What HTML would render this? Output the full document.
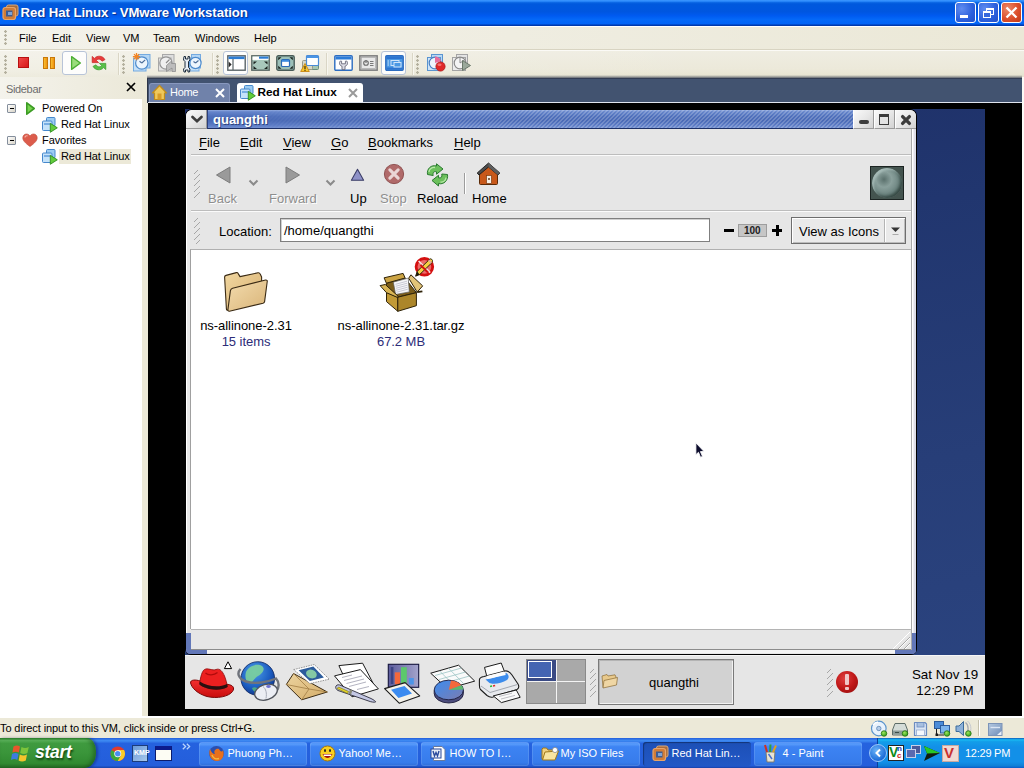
<!DOCTYPE html>
<html><head><meta charset="utf-8"><title>Red Hat Linux - VMware Workstation</title>
<style>
*{box-sizing:border-box;margin:0;padding:0}
html,body{width:1024px;height:768px;overflow:hidden;background:#ece9d8;font-family:"Liberation Sans",sans-serif;font-size:11px;color:#000}
.abs,.abs>*{position:absolute}
#root{position:relative;width:1024px;height:768px;overflow:hidden}
#root div,#root span,#root svg{position:absolute;white-space:nowrap}
/* XP title */
#xptitle{left:0;top:0;width:1024px;height:26px;background:linear-gradient(to bottom,#3c98ff 0%,#2a88fa 5%,#0a66e4 10%,#0059dd 15%,#0056e0 45%,#005af0 60%,#0468f8 75%,#0264f6 91%,#0048c8 95%,#00309c 100%)}
#xptitle .t{left:20.500px;top:5px;font-weight:bold;font-size:13.150px;color:#fff;text-shadow:1px 1px 1px #0a2f8a;letter-spacing:-0.05px}
.capbtn{width:21px;height:21px;top:2px;border:1px solid #fff;border-radius:3px;background:radial-gradient(circle at 30% 30%,#5f8cf0 0%,#2b5fdc 60%,#2350c8 100%)}
#xpmenu{left:0;top:26px;width:1024px;height:24px;background:linear-gradient(to right,#f3f2ea 0%,#efede1 50%,#ebe8d7 100%);border-top:1px solid #fff;border-bottom:1px solid #d8d4c2}
#xpmenu span{top:5px;font-size:11px}
#xptool{left:0;top:50px;width:1024px;height:27px;box-shadow:inset 0 1px 0 #fbfaf6;background:linear-gradient(to right,rgba(255,255,255,.300),rgba(255,255,255,0) 70%),linear-gradient(to bottom,#efede2 0%,#ece9da 70%,#e6e3d0 100%)}
#tshadow{left:147px;top:75px;width:875px;height:4px;background:linear-gradient(to bottom,rgba(44,52,72,0),rgba(44,52,72,.350) 40%,#2c3448 100%)}
.grip{width:3px;height:18px;background-image:radial-gradient(circle at 1.5px 1.5px,#b4b09e 1px,transparent 1.500px);background-size:3px 4px}
.tsep{width:1px;height:22px;background:#dad6c6;box-shadow:1px 0 0 #f8f7f0}
.tbtn{border:1px solid #b8c4d8;border-radius:3px;background:#fdfdfc}
/* sidebar */
#side{left:0;top:77px;width:142px;height:641px;background:#fff}
#sidehead{left:0;top:0;width:142px;height:22px;background:linear-gradient(to right,#f4f3ec,#ebe8d8)}
#sidehead .l{left:6px;top:6px;color:#6d6d6d;font-size:11px;letter-spacing:-0.350px}
#split{left:142px;top:77px;width:6px;height:641px;background:#ece9d8}
#tabs{left:147px;top:78px;width:875px;height:25px;background:#425370;border-top:1.500px solid #323c54;border-left:1px solid #2c3448}
#vm{left:148px;top:103px;width:874px;height:613px;background:#000}
#vmr{left:1022px;top:77px;width:2px;height:641px;background:#fbfaf6}
#xpstatus{left:0;top:716px;width:1024px;height:22px;background:#ece9d8;border-top:2px solid #fff}
#xpstatus .l{left:0px;top:4px;font-size:11px;letter-spacing:-0.1px}
#taskbar{left:0;top:738px;width:1024px;height:30px;background:linear-gradient(to bottom,#245edb 0%,#3f8cf3 9%,#2562df 18%,#245edb 92%,#1941a5 100%)}
.tk{top:4px;height:24px;width:108px;border-radius:3px;background:linear-gradient(to bottom,#3c81f3 0%,#5a9dfb 8%,#3d83f3 20%,#377ceb 85%,#2f6dd8 100%);box-shadow:inset 0 0 0 1px rgba(255,255,255,.12)}
.tk span{color:#fff;font-size:11px;top:5px;left:28.500px}
.tk.act{background:linear-gradient(to bottom,#1c4fb5 0%,#1e52bb 30%,#2258c5 100%);box-shadow:inset 1px 1px 1px rgba(0,0,0,.35)}
/* guest */
#guest{left:37px;top:6px;width:800px;height:600px;background:linear-gradient(170deg,#1d2e66 0%,#21366f 30%,#273e78 65%,#2b4480 100%);overflow:hidden;font-size:13px}

/* guest window */
#g{left:0;top:0;width:1024px;height:768px;font-size:13px}
#gwin{left:186px;top:110px;width:730px;height:544px;background:#e6e6e6;border-radius:6px 6px 5px 5px;box-shadow:0 0 0 1px #000}
#gtitle{left:21px;top:0;width:646px;height:19px;background:linear-gradient(to bottom,#92abdf 0%,#6585cb 10%,#4f70bb 35%,#4a6ab6 60%,#5c7cc6 85%,#7490d0 100%);border-bottom:1px solid #1c2f66;border-left:1px solid #2c3f7a}
#ghatch{left:40px;top:0;width:606px;height:18px;background:repeating-linear-gradient(135deg,rgba(255,255,255,0) 0,rgba(255,255,255,0) 1.600px,rgba(255,255,255,.200) 1.600px,rgba(255,255,255,.200) 2.830px);-webkit-mask-image:linear-gradient(to right,transparent 0,#000 30%);mask-image:linear-gradient(to right,transparent 0,#000 30%)}
#gtitle .t{left:5px;top:2px;font-weight:bold;font-size:13px;color:#fff;text-shadow:1px 1px 0 rgba(20,30,80,.6)}
.gwb{top:0;height:19px;width:21px;background:linear-gradient(135deg,#fafafa 0%,#e8e8e8 50%,#d2d2d2 100%);border-left:1px solid #fff;border-right:1px solid #9a9a9a;border-bottom:1px solid #9a9a9a}
#gmenu{left:5px;top:19px;width:720px;height:26px;border-bottom:1px solid #bdbdbd}
#gmenu span{top:6px;margin-left:-1px}
#gmenu u{text-decoration:underline;text-underline-offset:2px}
#gtool{left:5px;top:45px;width:720px;height:56px;border-top:1px solid #fbfbfb;border-bottom:1px solid #bdbdbd}
#gloc{left:5px;top:101px;width:720px;height:38px;border-top:1px solid #fbfbfb}
.ghandle{width:6px;background:repeating-linear-gradient(135deg,transparent 0,transparent 2.300px,#a6a6a6 2.300px,#a6a6a6 2.900px,#fff 2.900px,#fff 3.500px,transparent 3.500px,transparent 4.240px)}
.glbl{font-size:13px;color:#000}
.glbl.dis{color:#8e8e8e;text-shadow:1px 1px 0 #fff}
#gcontent{left:4px;top:139px;width:721px;height:380px;background:#fff;border-top:1px solid #b0b0b0;border-left:1px solid #a0a0a0}
#gstatus{left:5px;top:519px;width:720px;height:21px;border-top:1px solid #b4b4b4;border-bottom:1px solid #8c8c8c}

#gpanel{left:185px;top:655px;width:800px;height:54px;background:#e6e6e6;box-shadow:inset 0 1px 0 #f6f6f6;font-size:13px}
.ws{background:#a9a9a9}
.ficon{font-size:13px;text-align:center;letter-spacing:-0.050px}

.tri{width:0;height:0}
.tree span{font-size:11px;letter-spacing:-0.080px}
.pm{width:9px;height:9px;border:1px solid #848e9c;background:linear-gradient(135deg,#fff,#d8d4c8);border-radius:1px}
.pm:after{content:"";position:absolute;left:1.5px;top:3px;width:4.5px;height:1px;background:#000}
#start{left:0;top:0;width:96px;height:30px;border-radius:0 9px 11px 0 / 0 13px 15px 0;background:linear-gradient(to bottom,#2f8a2f 0%,#59b259 8%,#3f9a3f 18%,#3a953a 50%,#318a31 85%,#266f26 100%);box-shadow:inset -3px 0 4px rgba(0,40,0,.35), 2px 0 3px rgba(0,0,60,.35)}
#start span{left:35px;top:4px;font-size:17.500px;font-weight:bold;font-style:italic;color:#fff;text-shadow:1px 2px 2px rgba(0,40,0,.7);letter-spacing:-0.3px}
#tray{left:877px;top:0;width:147px;height:30px;background:linear-gradient(to bottom,#0c59b9 0%,#19b9f3 6%,#139ee9 12%,#1290e8 30%,#1290e8 80%,#0f7fd6 93%,#095bc9 100%);border-left:1px solid #0a3f9a}
</style></head><body><div id="root"><svg width="0" height="0" style="left:0;top:0"><defs>
<g id="vmicon"><rect x="5.500" y="1.500" width="8.500" height="8.500" rx="1" fill="#9cccf2" stroke="#4688cc" stroke-width="1"/><rect x="1.500" y="5" width="9.500" height="9.500" rx="1" fill="#c4e2fa" stroke="#4688cc" stroke-width="1"/><rect x="3" y="7" width="6.500" height="2" fill="#78aee4"/><path d="M9.300 7.300 L16.300 11.800 L9.300 16.300 Z" fill="#62cc3c" stroke="#2c8c1c" stroke-width=".9" stroke-linejoin="round"/></g>
</defs></svg>

<div id="xptitle"><svg style="left:2px;top:4px" width="17" height="17" viewBox="0 0 17 17"><rect x="4.500" y="1" width="11.500" height="11" rx="2" fill="#a86c3c" stroke="#d8a878" stroke-width="1"/><rect x="1" y="3.500" width="12.500" height="12" rx="2.200" fill="#d07c38" stroke="#e8a468" stroke-width="1.200"/><rect x="4" y="6.500" width="6.500" height="6" fill="#3c5c94"/><rect x="6" y="8" width="4" height="3" fill="#7ca4d8"/></svg>
<div class="capbtn" style="left:955px"></div><div style="left:960px;top:15px;width:8px;height:3px;background:#fff"></div>
<div class="capbtn" style="left:978px"></div><div style="left:986px;top:8px;width:8px;height:7px;border:1px solid #fff;border-top-width:2px"></div><div style="left:983px;top:11px;width:8px;height:7px;border:1px solid #fff;border-top-width:2px;background:#3667dd"></div>
<div class="capbtn" style="left:1001px;background:radial-gradient(circle at 30% 30%,#ec8a6a 0%,#dc4f2c 55%,#c03a18 100%)"></div>
<svg style="left:1001px;top:2px" width="21" height="21" viewBox="0 0 21 21"><path d="M5.5 5.5 L15.5 15.5 M15.5 5.5 L5.5 15.5" stroke="#fff" stroke-width="2.3"/></svg><span class="t">Red Hat Linux - VMware Workstation</span></div>
<div id="xpmenu">
<div class="grip" style="left:4px;top:3px;height:16px"></div>
<span style="left:19px">File</span><span style="left:52px">Edit</span><span style="left:86px">View</span><span style="left:123px">VM</span><span style="left:153px">Team</span><span style="left:195px">Windows</span><span style="left:254px">Help</span>
</div>
<div id="xptool">
<div class="grip" style="left:4px;top:5px;height:19px"></div>
<div style="left:18px;top:7px;width:11px;height:11px;background:linear-gradient(135deg,#f04848,#d81818);border:1px solid #b81010"></div>
<div style="left:43px;top:7px;width:5px;height:12px;background:linear-gradient(to right,#f8c030,#f09010);border:1px solid #c87808"></div>
<div style="left:50px;top:7px;width:5px;height:12px;background:linear-gradient(to right,#f8c030,#f09010);border:1px solid #c87808"></div>
<div class="tbtn" style="left:62px;top:1px;width:25px;height:24px"></div>
<svg style="left:70px;top:5px" width="12" height="16" viewBox="0 0 12 16"><path d="M1.6 1.6 L10.4 8 L1.6 14.4 Z" fill="#9adc7c" stroke="#4cae34" stroke-width="1.3" stroke-linejoin="round"/></svg>
<svg style="left:90px;top:4px" width="18" height="18" viewBox="0 0 18 18"><path d="M2.2 8.6 L2.2 2.4 L4.4 4.4 C7 1.2 12.6 1.4 15 5.6 L12 7.2 C10.4 4.6 7.6 4.6 6.4 6.4 L8.6 8.6 Z" fill="#e83c3c" stroke="#c42020" stroke-width=".7"/><path d="M15.8 9.4 L15.8 15.6 L13.6 13.6 C11 16.8 5.4 16.6 3 12.4 L6 10.8 C7.6 13.4 10.4 13.4 11.6 11.6 L9.4 9.4 Z" fill="#58c048" stroke="#38982c" stroke-width=".7"/></svg>
<div class="tsep" style="left:118px;top:3px"></div>
<div class="grip" style="left:122px;top:5px;height:19px"></div>
<svg style="left:132px;top:2px" width="20" height="21" viewBox="0 0 20 21"><rect x="6.500" y="2.500" width="11.500" height="13.500" fill="#b4d6f4" stroke="#74aae0"/><rect x="1.500" y="6" width="12.500" height="13" fill="#c4e0f8" stroke="#74aae0"/><circle cx="9.800" cy="11" r="6.200" fill="#ecf5fd" stroke="#4c8acc" stroke-width="1.200"/><path d="M9.800 11 L13.200 7.800 M9.800 11 L7.500 9.300" stroke="#4a6c98" stroke-width="1.100"/><path d="M4.500 1 L4.500 8.200 M.9 4.600 L8.100 4.600 M2 2.100 L7 7.100 M7 2.100 L2 7.100" stroke="#f48420" stroke-width="1.300"/></svg>
<svg style="left:157px;top:2px" width="20" height="21" viewBox="0 0 20 21"><rect x="5.500" y="2.500" width="11.500" height="13.500" fill="#dedede" stroke="#a8a8a8"/><rect x="1.500" y="6" width="12.500" height="13" fill="#e4e4e4" stroke="#a8a8a8"/><circle cx="9" cy="11" r="6.200" fill="#f0f0f0" stroke="#949494" stroke-width="1.200"/><path d="M9 11 L12.500 7.500" stroke="#8a8a8a" stroke-width="1.100"/><path d="M9.500 13.500 L14.500 9 L14.500 11.500 L18.500 11.500 L18.500 19.500 L15 19.500 L15 16 L9.500 19.500 Z" fill="#bcbcbc" stroke="#8e8e8e" stroke-width=".8"/></svg>
<svg style="left:182px;top:2px" width="20" height="21" viewBox="0 0 20 21"><rect x="9.500" y="2.500" width="9" height="13.500" fill="#b4d6f4" stroke="#74aae0"/><rect x="7.500" y="6" width="9.500" height="13" fill="#c4e0f8" stroke="#74aae0"/><circle cx="13.500" cy="11" r="5.600" fill="#ecf5fd" stroke="#4c8acc" stroke-width="1.200"/><path d="M13.500 11 L16.500 8.500 M13.500 11 L11.500 9.500" stroke="#4a6c98" stroke-width="1.100"/><path d="M2 4.500 L3.500 4.500 L3.500 7 L6 7 L6 4.500 L7.500 4.500 L8 8 L6.500 9.500 L6.500 15.500 L8 17 L7.500 20 L6 20 L6 18 L3.500 18 L3.500 20 L2 20 L1.500 17 L3 15.500 L3 9.500 L1.500 8 Z" fill="#e8eef4" stroke="#1c2c3c" stroke-width="1" stroke-linejoin="round"/></svg>
<div class="tsep" style="left:212px;top:3px"></div>
<div class="grip" style="left:216px;top:5px;height:19px"></div>
<div class="tbtn" style="left:223px;top:1px;width:25px;height:24px"></div>
<svg style="left:227px;top:5px" width="19" height="16" viewBox="0 0 19 16"><rect x=".8" y=".8" width="17.400" height="14.400" fill="#fff" stroke="#5a6468" stroke-width="1.400"/><rect x="1.500" y="1.500" width="16" height="2.600" fill="#2c7cd4"/><path d="M6 4 L6 15" stroke="#5a6468" stroke-width="1.200"/><path d="M1.600 6.500 L4.600 9.500 L1.600 12.500 Z" fill="#2a2a2a"/></svg>
<svg style="left:251px;top:5px" width="19" height="16" viewBox="0 0 19 16"><rect x=".8" y=".8" width="17.400" height="14.400" fill="#a8c8bc" stroke="#5a6864" stroke-width="1.400"/><rect x="1.500" y="1.500" width="16" height="3.400" fill="#fff"/><rect x="8" y="1.500" width="9.500" height="2.200" fill="#2c7cd4"/><path d="M2.500 6.500 L6 6.500 L2.500 9.500 Z M16.500 6.500 L13 6.500 L16.500 9.500 Z M2.500 14 L6 14 L2.500 11 Z M16.500 14 L13 14 L16.500 11 Z" fill="#1c2420"/></svg>
<svg style="left:276px;top:5px" width="19" height="16" viewBox="0 0 19 16"><rect x=".8" y=".8" width="17.400" height="14.400" rx="1.500" fill="#9cc0b8" stroke="#4a5c58" stroke-width="1.400"/><path d="M2.200 2.200 L5.500 2.200 L2.200 5.200 Z M16.800 2.200 L13.500 2.200 L16.800 5.200 Z M2.200 13.800 L5.500 13.800 L2.200 10.800 Z M16.800 13.800 L13.500 13.800 L16.800 10.800 Z" fill="#1c2420"/><rect x="5.500" y="4.500" width="8" height="7" rx="1" fill="#fff" stroke="#2c6cb8" stroke-width="1.200"/><rect x="6" y="5" width="7" height="1.800" fill="#3c8ce0"/></svg>
<svg style="left:300px;top:4px" width="21" height="19" viewBox="0 0 21 19"><rect x="8.500" y="7.500" width="10" height="8" rx="1" fill="#a8c8b4" stroke="#6a8c7c"/><rect x="2.500" y="6.500" width="10" height="9" rx="1" fill="#d8d8c8" stroke="#9a9a8a"/><rect x="6.500" y="1.500" width="12" height="10" rx="1" fill="#fff" stroke="#4a8cd8" stroke-width="1.200"/><rect x="7" y="2" width="11" height="2" fill="#4a94e4"/><path d="M5 9.500 L9.300 17.500 L.7 17.500 Z" fill="#f8c830" stroke="#c88810" stroke-width=".9" stroke-linejoin="round"/><path d="M5 12 L5 15" stroke="#3a2a08" stroke-width="1.200"/><circle cx="5" cy="16.300" r=".7" fill="#3a2a08"/></svg>
<div class="tsep" style="left:326px;top:3px"></div>
<svg style="left:334px;top:5px" width="19" height="16" viewBox="0 0 19 16"><rect x=".8" y=".8" width="17.400" height="14.400" rx="1" fill="#fff" stroke="#2c6cc0" stroke-width="1.400"/><rect x="1.500" y="1.500" width="16" height="3" fill="#2c7cd8"/><path d="M6.300 6 C4.800 7.800 5.400 10.600 8 11.200 L8 14.600 L11 14.600 L11 11.200 C13.600 10.600 14.200 7.800 12.700 6 L11.400 6.200 L11.400 8.800 L7.600 8.800 L7.600 6.200 Z" fill="#dcdce4" stroke="#6a6a7a" stroke-width=".9" stroke-linejoin="round"/></svg>
<svg style="left:359px;top:5px" width="19" height="16" viewBox="0 0 19 16"><rect x=".8" y=".8" width="17.400" height="14.400" fill="#cccccc" stroke="#7c7c7c" stroke-width="1.400"/><rect x="2.500" y="2.500" width="14" height="11" fill="#e8e8e8" stroke="#a4a4a4" stroke-width=".6"/><circle cx="7" cy="8" r="2.300" fill="none" stroke="#6a6a6a" stroke-width="1.100"/><path d="M7 5 L7 8" stroke="#6a6a6a" stroke-width="1.100"/><path d="M11 6.500 L14.500 6.500 M11 8.500 L14.500 8.500 M11 10.500 L14.500 10.500" stroke="#7a7a7a" stroke-width="1"/></svg>
<div class="tbtn" style="left:381px;top:1px;width:25px;height:24px"></div>
<svg style="left:385px;top:5px" width="19" height="16" viewBox="0 0 19 16"><rect x=".8" y=".8" width="17.400" height="14.400" rx="1" fill="#4a98e4" stroke="#2c6cc0" stroke-width="1.400"/><rect x="1.500" y="1.500" width="16" height="2.500" fill="#2c74d0"/><rect x="1.500" y="12.500" width="16" height="2" fill="#2c74d0"/><rect x="6" y="5.500" width="8" height="5" fill="none" stroke="#cfe4fa" stroke-width="1"/><rect x="9" y="7.500" width="7" height="4.500" fill="#4a98e4" stroke="#cfe4fa" stroke-width="1"/><path d="M2.500 6 L4 6 M2.500 8 L4 8 M2.500 10 L4 10" stroke="#cfe4fa" stroke-width="1"/></svg>
<div class="tsep" style="left:412px;top:3px"></div>
<div class="grip" style="left:416px;top:5px;height:19px"></div>
<svg style="left:426px;top:2px" width="21" height="21" viewBox="0 0 21 21"><rect x="5.500" y="2.500" width="11" height="13" fill="#b8d8f4" stroke="#5a94d0"/><rect x="1.500" y="5.500" width="13" height="13" fill="#cfe4f8" stroke="#5a94d0"/><circle cx="9" cy="11" r="5.800" fill="#eef4fc" stroke="#4a80c0" stroke-width="1.200"/><path d="M9 11 L9 4.500 A6.500 6.500 0 0 1 15 9 Z" fill="#e86c9c"/><circle cx="14.500" cy="14.500" r="4.600" fill="#e02828" stroke="#b01818" stroke-width=".8"/><ellipse cx="13.500" cy="12.800" rx="2" ry="1.200" fill="#f47070"/></svg>
<svg style="left:451px;top:2px" width="21" height="21" viewBox="0 0 21 21"><rect x="5.500" y="2.500" width="11" height="13" fill="#e4e4e4" stroke="#a4a4a4"/><rect x="1.500" y="5.500" width="13" height="13" fill="#ececec" stroke="#a4a4a4"/><circle cx="9" cy="11" r="5.800" fill="#f4f4f4" stroke="#8a8a8a" stroke-width="1.200"/><path d="M9 11 L9 5 M9 11 L13.500 8" stroke="#8a8a8a" stroke-width="1"/><path d="M11.500 8.500 L19.500 13.500 L11.500 18.500 Z" fill="#9aa89a" stroke="#6a786a" stroke-width="1" stroke-linejoin="round"/></svg>
</div>
<div id="side"><div id="sidehead"><span class="l">Sidebar</span><svg style="left:126px;top:5px" width="10" height="10" viewBox="0 0 10 10"><path d="M1 1 L9 9 M9 1 L1 9" stroke="#000" stroke-width="1.7"/></svg></div>
<div class="tree" style="left:0;top:23px;width:142px;height:100px">
 <div class="pm" style="left:7px;top:4px"></div>
 <svg style="left:25px;top:1px" width="11" height="15" viewBox="0 0 11 15"><path d="M1.800 1.800 L9.200 7.500 L1.800 13.200 Z" fill="#78d450" stroke="#3c9c24" stroke-width="1.600" stroke-linejoin="round"/></svg>
 <span style="left:42px;top:2px">Powered On</span>
 <svg class="vmi" style="left:41px;top:16px" width="17" height="17" viewBox="0 0 17 17"><use href="#vmicon"/></svg>
 <span style="left:61px;top:18px">Red Hat Linux</span>
 <div class="pm" style="left:7px;top:36px"></div>
 <svg style="left:22px;top:33px" width="16" height="15" viewBox="0 0 16 15"><path d="M8 13.5 C3 10 0.8 7.5 0.8 4.8 C0.8 2.4 2.6 1 4.4 1 C6 1 7.2 1.8 8 3 C8.8 1.8 10 1 11.6 1 C13.4 1 15.2 2.4 15.2 4.8 C15.2 7.5 13 10 8 13.5 Z" fill="#dc5c4c" stroke="#c04838" stroke-width=".6"/><path d="M3 4.500 C3 3 4.500 2.400 5.600 3" stroke="#f4b0a4" stroke-width="1.2" fill="none"/></svg>
 <span style="left:42px;top:34px">Favorites</span>
 <div style="left:59px;top:49px;width:72px;height:15px;background:#ece9d8"></div>
 <svg class="vmi" style="left:41px;top:48px" width="17" height="17" viewBox="0 0 17 17"><use href="#vmicon"/></svg>
 <span style="left:61px;top:50px">Red Hat Linux</span>
</div></div>
<div id="split"></div>
<div id="tshadow"></div><div id="tabs">
 <div style="left:1px;top:4px;width:81px;height:20px;background:#7082aa;border-radius:3px 3px 0 0;border:1px solid #8898be;border-bottom:0"></div>
 <svg style="left:3px;top:5px" width="17" height="17" viewBox="0 0 17 17"><path d="M1.5 9 L8.5 1.5 L15.5 9 L13.5 9 L13.5 15.5 L3.5 15.5 L3.5 9 Z" fill="#f0c85a" stroke="#c08c1c" stroke-width="1.2" stroke-linejoin="round"/><rect x="6.5" y="9.5" width="4" height="6" fill="#d89c28"/></svg>
 <span style="left:22px;top:7px;color:#fff;font-size:11px;letter-spacing:-0.300px">Home</span>
 <svg style="left:67px;top:9px" width="10" height="10" viewBox="0 0 10 10"><path d="M1 1 L9 9 M9 1 L1 9" stroke="#fff" stroke-width="2"/></svg>
 <div style="left:89px;top:4px;width:126px;height:21px;background:#fff;border-radius:3px 3px 0 0"></div>
 <svg style="left:91px;top:5px" width="17" height="17" viewBox="0 0 17 17"><use href="#vmicon"/></svg>
 <span style="left:109.500px;top:6px;color:#000;font-size:11.800px;font-weight:bold">Red Hat Linux</span>
 <svg style="left:200px;top:9px" width="10" height="10" viewBox="0 0 10 10"><path d="M1 1 L9 9 M9 1 L1 9" stroke="#9a9a9a" stroke-width="2"/></svg>
 <div style="left:0;top:23px;width:874px;height:1px;background:#dfe4ee"></div>
</div>
<div id="vmr"></div><div id="vm"><div id="guest"></div></div>
<div id="g">
<div id="gwin">
 <div class="gwb" style="left:0;width:21px;border-radius:6px 0 0 0;border-left:0"></div>
 <svg style="left:5px;top:5px" width="12" height="9" viewBox="0 0 12 9"><path d="M1.5 2 L6 6.2 L10.5 2" fill="none" stroke="#3c3c3c" stroke-width="2.6" stroke-linecap="round" stroke-linejoin="miter"/></svg>
 <div id="gtitle"><div id="ghatch"></div><span class="t">quangthi</span></div>
 <div class="gwb" style="left:667px"></div>
 <div class="gwb" style="left:688px"></div>
 <div class="gwb" style="left:709px;border-radius:0 6px 0 0;border-right:0"></div>
 <div style="left:673px;top:10px;width:10px;height:4px;background:#3c3c3c;border-radius:2px"></div>
 <div style="left:693px;top:4px;width:10px;height:10.500px;border:1.400px solid #3c3c3c;border-top-width:3.600px;background:#e4e4e4"></div>
 <svg style="left:714px;top:4px" width="12" height="12" viewBox="0 0 12 12"><path d="M2.600 2.600 L9.400 9.400 M9.400 2.600 L2.600 9.400" stroke="#3c3c3c" stroke-width="3.300" stroke-linecap="round"/></svg>
 <div style="left:0;top:19px;width:1.200px;height:504px;background:#fff"></div>
 <div style="left:725px;top:19px;width:1px;height:522px;background:#a8a8a8"></div><div style="left:726px;top:19px;width:4px;height:504px;background:linear-gradient(to right,#fff 0,#fff 30%,#dedee8 45%,#dcdce6 100%)"></div>
 <div id="gmenu">
  <span style="left:9px"><u>F</u>ile</span><span style="left:50px"><u>E</u>dit</span><span style="left:93px"><u>V</u>iew</span><span style="left:141px"><u>G</u>o</span><span style="left:178px"><u>B</u>ookmarks</span><span style="left:264px"><u>H</u>elp</span>
 </div>
 <div id="gtool">
  <div class="ghandle" style="left:3px;top:14px;height:28px"></div>
  <svg style="left:24px;top:9px" width="18" height="20" viewBox="0 0 18 20"><path d="M15 2 L15 18 L1.5 10 Z" fill="#9a9a9a" stroke="#7c7c7c" stroke-width="1"/></svg>
  <span class="glbl dis" style="left:17px;top:35px">Back</span>
  <svg style="left:57px;top:23px" width="11" height="8" viewBox="0 0 11 8"><path d="M1.5 1.5 L5.5 5.5 L9.5 1.5" fill="none" stroke="#8a8a8a" stroke-width="2"/></svg>
  <svg style="left:92px;top:9px" width="18" height="20" viewBox="0 0 18 20"><path d="M3 2 L3 18 L16.5 10 Z" fill="#9a9a9a" stroke="#7c7c7c" stroke-width="1"/></svg>
  <span class="glbl dis" style="left:78px;top:35px">Forward</span>
  <svg style="left:134px;top:23px" width="11" height="8" viewBox="0 0 11 8"><path d="M1.5 1.5 L5.5 5.5 L9.5 1.5" fill="none" stroke="#8a8a8a" stroke-width="2"/></svg>
  <svg style="left:159px;top:12px" width="15" height="14" viewBox="0 0 17 16"><path d="M8.5 1.5 L15.5 14 L1.5 14 Z" fill="#8f92c8" stroke="#3a3c66" stroke-width="1.2" stroke-linejoin="round"/></svg>
  <span class="glbl" style="left:159px;top:35px">Up</span>
  <svg style="left:192px;top:7px" width="22" height="22" viewBox="0 0 24 24"><circle cx="12" cy="12" r="10.5" fill="#b06a6a" stroke="#8a4a4a" stroke-width="1"/><path d="M7.5 7.5 L16.5 16.5 M16.5 7.5 L7.5 16.5" stroke="#ead6d6" stroke-width="3.4" stroke-linecap="round"/></svg>
  <span class="glbl dis" style="left:189px;top:35px">Stop</span>
  <svg style="left:234px;top:7px" width="25" height="24" viewBox="0 0 25 24"><g fill="#6cc05c" stroke="#2a7a30" stroke-width="1" stroke-linejoin="round"><path d="M2.500 11.500 C1.500 5.500 6.500 1.500 11.500 3 L11.500 .8 L18 6 L11.500 11.200 L11.500 8.800 C9 8 7.500 9.500 8.200 12.500 Z"/><path d="M22.500 11.500 C23.500 17.500 18.500 22 13.500 20.500 L13.500 23 L7 17.500 L13.500 12.300 L13.500 14.800 C16 15.500 17.500 14 16.800 11 Z"/></g><path d="M4 9 C4 6 7 4 10 4.500 M21 14.500 C21 17 18.500 19.500 15.500 19" stroke="#b8e8a8" stroke-width="1.300" fill="none"/></svg>
  <span class="glbl" style="left:226px;top:35px">Reload</span>
  <div style="left:273px;top:17px;width:1px;height:21px;background:#9c9c9c;box-shadow:1px 0 0 #fff"></div>
  <svg style="left:285px;top:6px" width="25" height="25" viewBox="0 0 25 25"><path d="M3.500 11.500 L3.500 21.500 Q3.500 22.500 4.500 22.500 L20.500 22.500 Q21.500 22.500 21.500 21.500 L21.500 11.500 L12.500 4 Z" fill="#c8581a" stroke="#5a2a08" stroke-width="1"/><path d="M1.200 11 L12.500 1 L23.800 11 L22 13 L12.500 5 L3 13 Z" fill="#4c4c4c" stroke="#1c1c1c" stroke-width=".9" stroke-linejoin="round"/><path d="M12.500 1 L23.800 11 L22 13 L12.500 5 Z" fill="#5e5e5e"/><rect x="10.500" y="13.500" width="5" height="8" fill="#f6efe6" stroke="#7a3a10" stroke-width=".7"/><rect x="12.300" y="16" width="1.400" height="2" fill="#5a2a08"/></svg>
  <span class="glbl" style="left:281px;top:35px">Home</span>
  <div style="left:679px;top:10px;width:34px;height:34px;background:#44544f;border:1px solid #1c2422"></div>
  <div style="left:681px;top:12px;width:30px;height:30px;border-radius:50%;background:radial-gradient(circle at 40% 38%,#a4b8b4 0%,#80989400 0%,#8aa09c 30%,#6a827e 62%,#4a5e5a 85%,#36484400 100%),#5a706c;box-shadow:inset 2px 2px 2px rgba(200,220,215,.5),inset -2px -2px 3px rgba(20,35,30,.5)"></div>
 </div>
 <div id="gloc">
  <div class="ghandle" style="left:3px;top:6px;height:26px"></div>
  <span class="glbl" style="left:28px;top:12px">Location:</span>
  <div style="left:89px;top:6px;width:430px;height:24px;background:#fff;border:1px solid #7f7f7f;box-shadow:inset 1px 1px 0 #d0d0d0"></div>
  <span class="glbl" style="left:93px;top:11px">/home/quangthi</span>
  <div style="left:533px;top:17px;width:10px;height:3px;background:#000"></div>
  <div style="left:547px;top:12px;width:29px;height:13px;background:#c6c6c6;border:1px solid #9e9e9e"></div>
  <span style="left:553px;top:13px;font-size:10px;font-weight:bold;color:#222">100</span>
  <div style="left:581px;top:17px;width:10px;height:3px;background:#000"></div>
  <div style="left:584.5px;top:13px;width:3px;height:11px;background:#000"></div>
  <div style="left:600px;top:5px;width:115px;height:27px;border:1px solid #6e6e6e;background:#eaeaea;box-shadow:inset 1px 1px 0 #fff,inset -1px -1px 0 #bcbcbc"></div>
  <span class="glbl" style="left:608px;top:12px">View as Icons</span>
  <div style="left:693px;top:7px;width:1px;height:23px;background:#b4b4b4;box-shadow:1px 0 0 #fff"></div>
  <svg style="left:699px;top:14px" width="11" height="11" viewBox="0 0 11 11"><path d="M1 1.5 L5.5 6 L10 1.5 Z" fill="#333"/><rect x="2.5" y="8" width="6" height="1" fill="#aaa"/></svg>
 </div>
 <div id="gcontent">
  <svg style="left:32px;top:21px" width="46" height="42" viewBox="-1 -1 46 42">
   <defs><linearGradient id="fg1" x1="0" y1="0" x2="1" y2="1"><stop offset="0" stop-color="#f0d6a0"/><stop offset="1" stop-color="#d8b070"/></linearGradient>
   <linearGradient id="fg2" x1="0" y1="0" x2="1" y2="1"><stop offset="0" stop-color="#f3dcae"/><stop offset="1" stop-color="#d9b478"/></linearGradient></defs>
   <path d="M0.6 5 Q0.6 3.8 2 3.4 L12.4 0.6 Q13.6 0.4 14.2 1.6 L16 4.6 L34 0.8 Q35.6 0.6 36.2 2 L37.6 5 L37.6 9 L4 38 Q2.6 38.6 2.4 37 Z" fill="url(#fg1)" stroke="#3a2a14" stroke-width="1.1" stroke-linejoin="round"/>
   <path d="M6.4 18.6 Q6.8 16.8 8.6 16.2 L41.6 8 Q43.6 7.8 43.2 9.8 L40.6 29.6 Q40.4 30.8 39 31.2 L5.4 39.2 Q3.8 39.4 3.9 37.8 Z" fill="url(#fg2)" stroke="#3a2a14" stroke-width="1.1" stroke-linejoin="round"/>
  </svg>
  <span class="ficon" style="left:-5px;top:68px;width:120px;color:#000">ns-allinone-2.31</span>
  <span class="ficon" style="left:-5px;top:84px;width:120px;color:#2d2d78">15 items</span>
  <svg style="left:187px;top:5px" width="62" height="60" viewBox="-1 -17 62 60">
   <g stroke="#2e2208" stroke-width="1" stroke-linejoin="round">
    <path d="M7.400 11.200 L25.900 6 L37.400 20.700 L18.800 25.200 L7.500 20.300 Z" fill="#7a5c1a"/>
    <path d="M5.100 5.800 L24.100 1.400 L26.100 6 L7.400 11.200 Z" fill="#cca444"/>
    <path d="M7.500 20.300 L18.800 25.200 L18.800 39.300 L7.500 29.600 Z" fill="#c29a36"/>
    <path d="M18.800 25.200 L37.400 20.700 L37.400 33.700 L18.800 39.300 Z" fill="#ac862a"/>
    <path d="M14.400 10.600 Q14.300 10.100 15 9.900 L28.500 6.300 Q29.200 6.200 29.300 6.900 L30.300 19.900 L16.600 22.500 Z" fill="#f6f6f8" stroke="#5a5a5a" stroke-width=".7"/>
    <path d="M1.100 13.600 L6.300 12.500 L19 24.100 L18.800 25.600 L7.500 20.700 Z" fill="#d8b454"/>
    <path d="M31.900 2.800 L43.700 13.900 L38.200 20.100 L29.700 6.200 Z" fill="#e2c478"/>
    <path d="M38.200 20.100 L43.400 19.300" stroke-width="1.800"/>
   </g>
   <g stroke="#b4b4c4" stroke-width=".7"><path d="M16.500 12.300 L28 9.200 M16.700 14.300 L28.200 11.200 M16.900 16.300 L28.400 13.200 M17.100 18.300 L28.600 15.200 M17.300 20.300 L28.800 17.200"/></g>
   <circle cx="45.400" cy="-5.200" r="8.300" fill="#ee6a6a" stroke="#d41010" stroke-width="2.800"/>
   <path d="M39.600 -11 L51.200 .6" stroke="#f4e4e4" stroke-width="1.600"/>
   <path d="M36.600 4.200 L38.200 -.6 L51.100 -13.200 Q52.800 -13.400 53.500 -11.500 L53.100 -9.500 L40.600 2.600 Z" fill="#f4d040" stroke="#1c1808" stroke-width=".9" stroke-linejoin="round"/>
   <path d="M36.600 4.200 L38.200 -.6 L40.600 2.600 Z" fill="#1c1808"/>
   <path d="M49.800 -12 L52.200 -8.700" stroke="#e8a8a0" stroke-width="1.600"/>
   <path d="M41.500 -7 L49 .5" stroke="#d41010" stroke-width="2"/>
  </svg>
  <span class="ficon" style="left:135px;top:68px;width:150px;color:#000">ns-allinone-2.31.tar.gz</span>
  <span class="ficon" style="left:135px;top:84px;width:150px;color:#2d2d78">67.2 MB</span>
 </div>
 <div id="gstatus"></div>
 <div style="left:0;top:523px;width:4.500px;height:21px;background:#6277b8;border-radius:0 0 0 5px"></div>
 <div style="left:0;top:539.500px;width:21px;height:4.500px;background:#6277b8;border-radius:0 0 0 5px"></div>
 <div style="left:725.500px;top:523px;width:4.500px;height:21px;background:#6277b8;border-radius:0 0 5px 0"></div>
 <div style="left:709px;top:539.500px;width:21px;height:4.500px;background:#6277b8;border-radius:0 0 5px 0"></div>
 <div style="left:21px;top:540px;width:688px;height:3px;background:#f4f4f4"></div>
 <div style="left:707px;top:522px;width:17px;height:17px;background:repeating-linear-gradient(135deg,transparent 0,transparent 2.400px,#a8a8a8 2.400px,#a8a8a8 3.200px,#fff 3.200px,#fff 3.900px,transparent 3.900px,transparent 4.240px);-webkit-mask-image:linear-gradient(135deg,transparent 50%,#000 50%);mask-image:linear-gradient(135deg,transparent 50%,#000 50%)"></div>

</div>
</div>

<div id="gpanel">
 <svg style="left:0;top:0" width="345" height="54" viewBox="185 655 345 54">
  <defs>
   <radialGradient id="gl" cx=".4" cy=".3" r=".8"><stop offset="0" stop-color="#4a9ce8"/><stop offset=".6" stop-color="#1c5cc0"/><stop offset="1" stop-color="#0c2c78"/></radialGradient>
   <linearGradient id="hat" x1="0" y1="0" x2="0" y2="1"><stop offset="0" stop-color="#f43030"/><stop offset="1" stop-color="#c80c0c"/></linearGradient>
   <linearGradient id="env" x1="0" y1="0" x2="1" y2="1"><stop offset="0" stop-color="#ecd4a0"/><stop offset="1" stop-color="#d4ac68"/></linearGradient>
   <linearGradient id="imp" x1="0" y1="0" x2="1" y2="0"><stop offset="0" stop-color="#5c5c9c"/><stop offset="1" stop-color="#a4a4cc"/></linearGradient>
   <linearGradient id="pie" x1="0" y1="0" x2="1" y2="1"><stop offset="0" stop-color="#3c8cf0"/><stop offset="1" stop-color="#7c7cb0"/></linearGradient>
  </defs>
  <!-- red hat -->
  <path d="M190.600 683 C190 679.500 196 679.500 200 681 L228 684.500 C233 685 235 688 232.500 691.500 C229 696.500 217 699 207 696.500 C198 694 191.500 688 190.600 683 Z" fill="url(#hat)" stroke="#7a0808" stroke-width="1"/>
  <path d="M199.500 684 C200.500 677 202 671 204.500 669.500 C208 667.500 212 671 216 669.500 C220 668 222.500 671.500 224.500 676 C226 680 227 684 227.500 686.500 C220 691 206 689.500 199.500 684 Z" fill="#ec2020" stroke="#8a0a0a" stroke-width=".8"/>
  <path d="M199.800 681.500 C207 686.500 219 688 227 684 L227.600 687 C220 691.500 206 690 199.400 684.500 Z" fill="#2a1010"/>
  <path d="M205.500 673 C208 675.500 214 675.500 217.500 672.500" stroke="#b00c0c" stroke-width="1.300" fill="none"/>
  <path d="M228 661.800 L231.600 668.600 L224.400 668.600 Z" fill="#fff" stroke="#000" stroke-width="1"/>
  <!-- globe -->
  <circle cx="257.800" cy="678.500" r="16.800" fill="url(#gl)" stroke="#0c2460" stroke-width=".8"/>
  <path d="M246 672 C249 665 258 663.500 262 666 C266 669 262 674 258 676 C254 678 253 683 249 683 C246 682 244.500 677 246 672 Z" fill="#7cd09c" opacity=".9"/>
  <path d="M252 688 C255 686 259 688 258 691 C257 693.500 253 692 252 688 Z" fill="#5cb87c" opacity=".8"/>
  <path d="M240.500 669 C236.500 673 238.500 679 246 681.500 C255 684.500 268 682 276 678.500 C279.500 682 279.500 688 276 692" fill="none" stroke="#70747c" stroke-width="2.400"/>
  <ellipse cx="266" cy="692.200" rx="11.600" ry="7.600" transform="rotate(-18 266 692.200)" fill="#eceef4" stroke="#50545c" stroke-width="1.300"/>
  <path d="M263 686.500 C266 689 267 693 266 698.500" stroke="#a8acb8" stroke-width="1" fill="none"/>
  <ellipse cx="268.500" cy="686.500" rx="2.400" ry="1.400" fill="#6c70d0"/>
  <!-- mail -->
  <path d="M286.300 684.500 L293.500 673.500 L327.300 692 L301.700 699.800 Z" fill="url(#env)" stroke="#3c2c14" stroke-width="1" stroke-linejoin="round"/>
  <path d="M286.300 684.500 L309 689 L327.300 692 M301.700 699.800 L309 689 L293.500 673.500" fill="none" stroke="#a8844c" stroke-width=".9"/>
  <path d="M293.700 669.600 L314.200 664.500 L329.300 679.200 L309.800 683.600 Z" fill="#fff" stroke="#8a8a8a" stroke-width=".9" stroke-dasharray="1.600 .9"/><path d="M298.600 670.300 L313.400 666.600 L323.900 677.400 L309.800 681 Z" fill="#2c5c9c"/><ellipse cx="311.400" cy="674" rx="5.500" ry="4.200" transform="rotate(20 311.400 674)" fill="#84c8a4"/>
  <!-- writer -->
  <path d="M338.900 665.600 L362.600 663.200 L374.300 685.500 L350 690 Z" fill="#fff" stroke="#1c1c1c" stroke-width="1" stroke-linejoin="round"/>
  <path d="M334.500 675.900 L360.400 669.600 L378.400 688.900 L352 696.800 Z" fill="#fff" stroke="#1c1c1c" stroke-width="1" stroke-linejoin="round"/>
  <path d="M342 677.500 L352 675 M344 680.500 L362 676 M346.500 683.500 L364 679 M349 686.500 L366 682 M357 689.500 L369 686.500" stroke="#a0a0b0" stroke-width=".8"/>
  <path d="M336 686 C337 684.500 339 684.500 341 685.500 L371 698.500 C374 700 376 701.500 375.600 702 C374 702.500 371 702 368 700.800 L338 690.500 C336 689.500 335.200 687.500 336 686 Z" fill="#c4c8e4" stroke="#2c2c3c" stroke-width=".9"/>
  <path d="M337 688.500 L347.500 693.500 L348.500 691.500 L338.500 687 Z" fill="#e8d828" stroke="#6c6410" stroke-width=".6"/>
  <path d="M350 689.500 L352.500 690.600 L351 694.500 L348.500 693.400 Z" fill="#8a8a7a"/>
  <!-- impress -->
  <rect x="388.300" y="664.300" width="30.400" height="23" fill="url(#imp)" stroke="#14143c" stroke-width="1.100"/>
  <rect x="390.800" y="667" width="2.600" height="17" fill="#3c4484"/>
  <rect x="394.800" y="672.300" width="5.200" height="12" fill="#f4683c"/>
  <rect x="401" y="667.200" width="5.800" height="16" fill="#5cc86c"/>
  <rect x="408.800" y="678" width="5" height="6.500" fill="#4c94e8"/>
  <path d="M384.600 688.600 L405.100 682.600 L419.700 695.900 L399.200 703.200 Z" fill="#f4f2ea" stroke="#1c1c1c" stroke-width="1.100" stroke-linejoin="round"/>
  <path d="M391 689.800 L404.500 686 L412 693.500 L398.500 698 Z" fill="#3c8cf0"/>
  <!-- calc -->
  <path d="M430.700 673.200 L458.600 665.200 L474.700 681.100 L447.600 688.800 Z" fill="#fafafa" stroke="#1c1c1c" stroke-width="1" stroke-linejoin="round"/>
  <path d="M435 675.500 L461.500 668 M439 679.500 L465.500 672 M443 683.500 L469.500 676 M439.500 670.800 L455 686.500 M448.500 668.200 L464 684" stroke="#9cc4c4" stroke-width=".8"/>
  <path d="M434.200 690.500 L434.200 693.500 A14.600 9.500 0 0 0 463.400 693.500 L463.400 690.500 Z" fill="#4c4c7c" stroke="#1c1c3c" stroke-width=".9"/>
  <ellipse cx="448.800" cy="690" rx="14.600" ry="9.800" fill="url(#pie)" stroke="#1c1c3c" stroke-width=".9"/>
  <path d="M448.800 690 L451 680.400 A14.600 9.800 0 0 1 461.500 685.200 Z" fill="#f4683c"/>
  <path d="M448.800 690 L461.500 685.200 A14.600 9.800 0 0 1 463.400 689.500 Z" fill="#5cb86c"/>
  <!-- printer -->
  <path d="M484.500 667.400 L501.200 663 L505.800 675 L487.500 679 Z" fill="#fcfcfc" stroke="#1c1c1c" stroke-width="1" stroke-linejoin="round"/>
  <path d="M479.400 680 C479.400 678 481 677 484 676.500 L505 671 C508 670.500 510 672 512 675 L518 684 C519 686 518.800 688.500 517 689.500 L493 697 C491 697.500 489 697 487 695.500 L480.500 689.500 C479.600 688.500 479.400 687 479.400 685 Z" fill="#e8eaee" stroke="#1c1c1c" stroke-width="1.100" stroke-linejoin="round"/>
  <path d="M485.500 679.500 C492 678.500 502 675.500 506.500 673 C509 675 509.500 678 507 680 C502 683.500 493 684.500 489.500 683 Z" fill="#3c8cec"/>
  <path d="M487.300 679 L505.800 675 L504 671.500 L486.500 676 Z" fill="#fcfcfc"/>
  <path d="M481 686 L490 692.500 L517.500 684.500" stroke="#a4a8b0" stroke-width="1" fill="none"/>
  <rect x="490" y="685.500" width="2" height="1.600" fill="#2cb82c" transform="rotate(-12 491 686)"/><rect x="493" y="685" width="2.200" height="1.600" fill="#e02c2c" transform="rotate(-12 494 686)"/>
  <path d="M493.300 695.900 L516.300 690 L520.200 697.300 L501.400 702.600 Z" fill="#fafafa" stroke="#1c1c1c" stroke-width="1" stroke-linejoin="round"/>
  <path d="M499 696.500 L512 693.200 M501 699 L515 695.400" stroke="#b0b0b8" stroke-width=".8"/>
 </svg>

 <div class="ws" style="left:341px;top:4px;width:60px;height:45px;background:#f4f4f4;border:1px solid #8a8a8a"></div>
 <div style="left:342px;top:5px;width:29px;height:21px;background:#3a4a84"></div>
 <div style="left:343px;top:6px;width:24px;height:17px;background:#4464b2;border:1px solid #fff"></div>
 <div class="ws" style="left:372px;top:5px;width:28px;height:21px"></div>
 <div class="ws" style="left:342px;top:27px;width:29px;height:21px"></div>
 <div class="ws" style="left:372px;top:27px;width:28px;height:21px"></div>
 <div class="ghandle" style="left:405px;top:14px;height:28px"></div>
 <div style="left:413px;top:4px;width:136px;height:46px;background:#d2d2d2;border:1px solid #7a7a7a;box-shadow:inset 1px 1px 0 #b4b4b4,inset -1px -1px 0 #f2f2f2"></div>
 <span style="left:464px;top:20px">quangthi</span>
 <svg style="left:416px;top:18px" width="18" height="16" viewBox="0 0 18 16"><path d="M1 3 L6 1.5 L7 3 L14 1.8 L15 4 L15 6 L2 14.5 Z" fill="#e8c98c" stroke="#8a6a34" stroke-width=".7"/><path d="M3 7.5 L16.5 4.5 L15.5 12 L2 15 Z" fill="#efd6a4" stroke="#8a6a34" stroke-width=".7"/></svg>
 <div class="ghandle" style="left:642px;top:14px;height:28px"></div>
 <div style="left:651px;top:16px;width:22px;height:22px;border-radius:50%;background:radial-gradient(circle at 40% 35%,#e04040 0%,#c01818 50%,#8a0c0c 100%)"></div>
 <div style="left:660.200px;top:19px;width:3.500px;height:10.500px;background:#f0c8c8;border-radius:1px"></div>
 <div style="left:660.200px;top:31.500px;width:3.500px;height:3.500px;background:#f0c8c8;border-radius:1px"></div>
 <span style="left:715px;top:12px;width:90px;text-align:center;font-size:13.400px">Sat Nov 19</span>
 <span style="left:715px;top:28px;width:90px;text-align:center;font-size:13.400px">12:29 PM</span>
</div>

<svg style="left:695px;top:442px" width="10.500" height="16.600" viewBox="0 0 12 19"><path d="M1 1 L1 14.500 L4 11.800 L6.300 17.500 L8.600 16.500 L6.200 11 L10.400 11 Z" fill="#0c0c2c" stroke="#fff" stroke-width="1" stroke-linejoin="round"/></svg>
<div id="xpstatus">
<svg style="left:864px;top:0" width="160" height="20" viewBox="864 718 160 20">
 <defs><radialGradient id="gd" cx=".4" cy=".35" r=".7"><stop offset="0" stop-color="#9ce45c"/><stop offset="1" stop-color="#2c9c14"/></radialGradient>
 <linearGradient id="msg" x1="0" y1="0" x2="1" y2="1"><stop offset="0" stop-color="#b4c8e0"/><stop offset="1" stop-color="#6c8cb8"/></linearGradient></defs>
 <circle cx="878.800" cy="728.500" r="7.300" fill="#e8f2fc" stroke="#5a94cc" stroke-width="1.200"/><circle cx="878.800" cy="728.500" r="2.200" fill="#b4cce8" stroke="#5a84b4" stroke-width=".8"/><path d="M873 725 A7 7 0 0 1 878 722" stroke="#fff" stroke-width="1.500" fill="none"/>
 <circle cx="884" cy="733.500" r="2.800" fill="url(#gd)" stroke="#1c6c0c" stroke-width=".7"/>
 <path d="M895 723.500 L905 723.500 L907.500 730 L907.500 735 L892.500 735 L892.500 730 Z" fill="#d4dcd8" stroke="#5c6c68" stroke-width="1" stroke-linejoin="round"/><rect x="893" y="730.500" width="14" height="4" fill="#8c9c98"/><path d="M895 732.500 L899 732.500" stroke="#3c4c48" stroke-width="1"/>
 <circle cx="905" cy="733.500" r="2.800" fill="url(#gd)" stroke="#1c6c0c" stroke-width=".7"/>
 <path d="M914.500 722.500 L925 722.500 L926.500 724 L926.500 735.500 L914.500 735.500 Z" fill="#dce6f4" stroke="#6c8cc0" stroke-width="1.200" stroke-linejoin="round"/><rect x="917" y="722.500" width="7" height="4.500" fill="#a8c0e0" stroke="#6c8cc0" stroke-width=".8"/><rect x="916.500" y="730" width="8" height="5.500" fill="#f4f8fc" stroke="#8ca4cc" stroke-width=".7"/>
 <rect x="934.500" y="721.500" width="9" height="7" fill="#4c8cd8" stroke="#2c5c9c" stroke-width="1"/><rect x="940.500" y="725.500" width="9" height="7.500" fill="#7cb4ec" stroke="#2c5c9c" stroke-width="1"/><path d="M936.500 729 L936.500 735 L944 735" stroke="#1c1c1c" stroke-width="1" fill="none"/><rect x="935.500" y="733.500" width="2.500" height="2.500" fill="#1c1c1c"/>
 <circle cx="947" cy="733.500" r="2.800" fill="url(#gd)" stroke="#1c6c0c" stroke-width=".7"/>
 <path d="M956 726 L959 726 L963.500 721.500 L963.500 735.500 L959 731.500 L956 731.500 Z" fill="#8cb0d8" stroke="#3c6c9c" stroke-width="1" stroke-linejoin="round"/><path d="M965.500 722.500 C969 725 969 732 965.500 734.500" stroke="#a4a8b0" stroke-width="1.300" fill="none"/><path d="M967.500 721 C972 724.500 972 732.500 967.500 736" stroke="#c4c8d0" stroke-width="1" fill="none"/>
 <circle cx="968.400" cy="733.500" r="2.800" fill="url(#gd)" stroke="#1c6c0c" stroke-width=".7"/>
 <path d="M978.500 720 L978.500 736" stroke="#c4c0ac" stroke-width="1"/><path d="M979.500 720 L979.500 736" stroke="#fff" stroke-width="1"/>
 <rect x="988.500" y="723.500" width="13.500" height="12" fill="url(#msg)" stroke="#7c94b8" stroke-width="1"/><path d="M990.500 727.500 L1000 727.500" stroke="#dce6f4" stroke-width="1.400"/><path d="M997 735 L1001.500 735 L1001.500 731 Z" fill="#e8eef8"/>
</svg><span class="l">To direct input to this VM, click inside or press Ctrl+G.</span></div>
<div id="taskbar"><div id="start"><svg style="left:11px;top:6px" width="20" height="19" viewBox="0 0 20 19"><path d="M2.5 2.5 Q6 .5 9 2.5 L7.8 8.5 Q5 6.8 1.4 8.5 Z" fill="#e8562c"/><path d="M10.5 3 Q14 5 17.8 3 L16.4 9 Q13 11 9.2 9 Z" fill="#7cc43c"/><path d="M1 10 Q4.5 8.2 7.5 10 L6.3 16 Q3.5 14.2 0 16 Z" fill="#3c7ce0"/><path d="M8.8 10.6 Q12.5 12.6 16 10.6 L14.8 16.6 Q11 18.6 7.6 16.6 Z" fill="#f4c42c"/></svg><span>start</span></div>
<svg style="left:109.500px;top:7.500px" width="15.500" height="15.500" viewBox="0 0 17 17"><circle cx="8.5" cy="8.5" r="8" fill="#e03c2c"/><path d="M8.5 8.5 L1.6 4.5 A8 8 0 0 0 8.5 16.5 L12 10.5 Z" fill="#3aa83c"/><path d="M8.5 8.5 L12 10.5 L8.5 16.5 A8 8 0 0 0 15.4 4.5 L8.5 4.5 Z" fill="#f8cc28"/><circle cx="8.5" cy="8.5" r="3.8" fill="#fff"/><circle cx="8.5" cy="8.5" r="3" fill="#4a8cf0"/></svg>
<div style="left:132px;top:7px;width:16px;height:17px;background:linear-gradient(135deg,#6a9ad8,#a8c8ec);border:1px solid #1c3c7a"></div><span style="left:134px;top:11px;font-size:7px;font-weight:bold;color:#fff">KMP</span>
<div style="left:155px;top:8px;width:17px;height:15px;background:#fdfdf4;border:1.5px solid #0c1c6c;border-top:4px solid #0c1c8c"></div>
<svg style="left:182px;top:5px" width="9" height="7" viewBox="0 0 9 7"><path d="M.8 .8 L3.6 3.5 L.8 6.2 M4.8 .8 L7.6 3.5 L4.8 6.2" stroke="#b8d4fc" stroke-width="1.3" fill="none"/></svg>
<div class="tk" style="left:199px"><svg style="left:9px;top:3px" width="17" height="17" viewBox="0 0 17 17"><circle cx="8.5" cy="8.5" r="7.5" fill="#2a4fb0"/><path d="M2 4 C0 10 3 16 9 16 C14 16 17 11 15 5 C14 8 12 6 11 4 C8 3 5 6 7 9 C5 9 3 7 2 4 Z" fill="#e8701c"/><path d="M4 10 C5 13 8 14.5 11 13.5" stroke="#f6b83c" stroke-width="1.5" fill="none"/></svg><span>Phuong Ph…</span></div><div class="tk" style="left:310px"><svg style="left:9px;top:3px" width="17" height="17" viewBox="0 0 17 17"><circle cx="8.5" cy="8.5" r="7.5" fill="#f8d020" stroke="#a87808" stroke-width="1"/><path d="M3.5 9 Q8.5 17 13.5 9 Z" fill="#a01010"/><path d="M4.5 9.5 L12.5 9.5 L12 11 L5 11 Z" fill="#fff"/><ellipse cx="6" cy="5.5" rx="1" ry="1.6" fill="#222"/><ellipse cx="11" cy="5.5" rx="1" ry="1.6" fill="#222"/></svg><span>Yahoo! Me…</span></div><div class="tk" style="left:421px"><svg style="left:9px;top:3px" width="17" height="17" viewBox="0 0 17 17"><path d="M3.5 1.5 L12 1.5 L15 4.5 L15 15.5 L3.5 15.5 Z" fill="#fff" stroke="#6a7a9a" stroke-width="1"/><rect x="1" y="4" width="10" height="9" fill="#e8eef8" stroke="#2a4a9c" stroke-width="1"/><path d="M3 6 L4.5 11 L6 7.5 L7.5 11 L9 6" stroke="#2a4a9c" stroke-width="1.4" fill="none"/></svg><span>HOW TO I…</span></div><div class="tk" style="left:532px"><svg style="left:9px;top:3px" width="19" height="17" viewBox="0 0 19 17"><path d="M1 4 L1 14 L13 14 L13 5 L7 5 L5.5 3 L2 3 Z" fill="#f0d080" stroke="#a07818" stroke-width="1"/><path d="M4 7 L17.5 6 L14 15 L1.5 15 Z" fill="#f8e4a0" stroke="#a07818" stroke-width="1"/><circle cx="14" cy="5" r="2.6" fill="#fff" stroke="#8a8a8a" stroke-width=".8"/></svg><span>My ISO Files</span></div><div class="tk act" style="left:643px"><svg style="left:9px;top:3px" width="17" height="17" viewBox="0 0 17 17"><rect x="4.500" y="1" width="11.500" height="11" rx="2" fill="#a86c3c" stroke="#d8a878" stroke-width="1"/><rect x="1" y="3.500" width="12.500" height="12" rx="2.200" fill="#d07c38" stroke="#e8a468" stroke-width="1.200"/><rect x="4" y="6.500" width="6.500" height="6" fill="#3c5c94"/><rect x="6" y="8" width="4" height="3" fill="#7ca4d8"/></svg><span>Red Hat Lin…</span></div><div class="tk" style="left:754px"><svg style="left:9px;top:2px" width="15" height="19" viewBox="0 0 15 19"><path d="M3 8 L12 8 L11 18 L4 18 Z" fill="#e8e4d4" stroke="#7a7668" stroke-width=".9"/><path d="M4 8 L2 1" stroke="#d03020" stroke-width="2"/><path d="M7 8 L7.5 0.5" stroke="#30a040" stroke-width="2"/><path d="M10 8 L13 1.5" stroke="#e0a020" stroke-width="2"/><path d="M5.5 10 L9 15" stroke="#4a70d0" stroke-width="1.5"/></svg><span>4 - Paint</span></div>
<div id="tray"></div>
<div style="left:869px;top:6px;width:18px;height:18px;border-radius:50%;background:radial-gradient(circle at 40% 35%,#6ab4f8,#1c6cd8 70%,#1450b0);border:1px solid #9cc8f8"></div>
<svg style="left:874px;top:10px" width="8" height="10" viewBox="0 0 8 10"><path d="M6 1.5 L2.5 5 L6 8.5" stroke="#fff" stroke-width="2" fill="none"/></svg>
<div style="left:888px;top:7px;width:16px;height:16px;background:#fff;border:1px solid #222"></div><span style="left:889px;top:6px;font-size:14px;font-weight:bold;color:#0a8a1c">V</span><span style="left:897px;top:6px;font-size:8px;font-weight:bold;color:#1c3cb0">n</span><span style="left:897px;top:13px;font-size:8px;font-weight:bold;color:#d01c1c">c</span>
<div style="left:911px;top:7px;width:10px;height:9px;background:#4a5a9a;border:1px solid #c8d0e8"></div><div style="left:906px;top:11px;width:10px;height:9px;background:#5a6ab0;border:1px solid #c8d0e8"></div>
<svg style="left:923px;top:7px" width="18" height="17" viewBox="0 0 18 17"><path d="M1 1 L17 8 L1 16 L4 8.5 Z" fill="#101c10"/><path d="M1 1 L17 8 L4 8.5 Z" fill="#28c828"/></svg>
<div style="left:942px;top:7px;width:17px;height:17px;background:#f0d8d0;border:1px solid #c8a8a0"></div><span style="left:944px;top:6px;font-size:15px;font-weight:bold;color:#c83030">V</span>
<span style="left:965px;top:9px;font-size:11px;color:#fff;letter-spacing:-0.250px">12:29 PM</span>
</div>

</div></body></html>
